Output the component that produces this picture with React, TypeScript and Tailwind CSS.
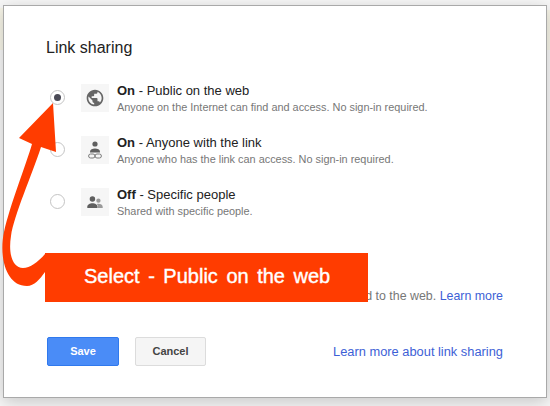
import { MdPublic } from "react-icons/md"

const LinkIcon = () => (
  <svg width="14" height="18" viewBox="0 0 14 18" fill="#5f5f5f">
    <circle cx="7" cy="3" r="2.6" />
    <path d="M2 10.500c0-1.800 2.500-3 5-3s5 1.200 5 3v1H2z" />
    <rect x="0.6" y="13" width="6.400" height="4" rx="2" fill="none" stroke="#7a7a7a" strokeWidth="1" />
    <rect x="7" y="13" width="6.400" height="4" rx="2" fill="none" stroke="#7a7a7a" strokeWidth="1" />
  </svg>
)

const PeopleIcon = () => (
  <svg width="16" height="12" viewBox="0 0 18 14">
    <circle cx="6" cy="3.500" r="3.200" fill="#5f5f5f" />
    <circle cx="13" cy="5.500" r="2.500" fill="#9a9a9a" />
    <path d="M0 14v-1.500C0 10 3 8.500 6 8.500s6 1.500 6 4V14z" fill="#5f5f5f" />
    <path d="M12.500 14v-1.500c0-1.200-.5-2.300-1.400-3.100.7-.3 1.300-.4 2-.4 2.500 0 4.900 1.300 4.900 3.500V14z" fill="#9a9a9a" />
  </svg>
)

const options = [
  { state: "On", title: "Public on the web", desc: "Anyone on the Internet can find and access. No sign-in required.", icon: <MdPublic size={20} color="#666" />, checked: true },
  { state: "On", title: "Anyone with the link", desc: "Anyone who has the link can access. No sign-in required.", icon: <LinkIcon />, checked: false },
  { state: "Off", title: "Specific people", desc: "Shared with specific people.", icon: <PeopleIcon />, checked: false },
]

function Option({ state, title, desc, icon, checked }: (typeof options)[number]) {
  return (
    <div className="flex h-7 items-center">
      <div className="mb-[1px] flex h-[15px] w-[15px] items-center justify-center rounded-full border border-[#c4c4c4] bg-white">
        {checked && <div className="h-[7px] w-[7px] rounded-full bg-[#4a4a55]" />}
      </div>
      <div className="ml-[16px] flex h-7 w-7 items-center justify-center bg-[#f6f6f6]">{icon}</div>
      <div className="ml-2 flex flex-col">
        <div className="text-[13px] leading-[16px] text-[#222]">
          <span className="font-bold">{state}</span> - {title}
        </div>
        <div className="mt-[1px] text-[10.9px] leading-[14px] text-[#777]">{desc}</div>
      </div>
    </div>
  )
}

function App() {
  return (
    <div className="relative h-[406px] w-[550px] overflow-hidden bg-[#f7f7f7] pl-[3px] pt-[5px] font-['Liberation_Sans',Arial,sans-serif]">
      {/* page peeking out behind the dialog */}
      <div className="absolute left-0 top-[8px] h-[42px] w-[3px] bg-[#f7f5e8]" />
      <div className="absolute right-0 top-[10px] h-[40px] w-[3px] bg-[#f7f5e8]" />

      <div className="relative h-[393px] w-[544px] border border-[#a9a9a9] bg-white pl-[42px] pr-[43px] pt-[33px] shadow-[0_4px_16px_rgba(0,0,0,0.2)]">
        <h1 className="text-[16px] leading-[18px] text-[#222]">Link sharing</h1>

        <div className="mt-[27px] flex flex-col gap-6 pl-[4px]">
          {options.map((o) => (
            <Option key={o.title} {...o} />
          ))}
        </div>

        <div className="mt-[73px] text-right text-[12.4px] leading-[14px] text-[#777]">
          Linked to the web. <a className="text-[#3d5fd6]">Learn more</a>
        </div>

        <div className="mt-[34px] flex items-center pl-px">
          <button className="h-[29px] w-[72px] rounded-[2px] border border-[#3079ed] bg-[#4a8cf7] text-[11px] font-bold text-white">
            Save
          </button>
          <button className="ml-4 h-[29px] w-[71px] rounded-[2px] border border-[#dcdcdc] bg-[#f5f5f5] text-[11px] font-bold text-[#444]">
            Cancel
          </button>
          <a className="ml-auto text-[12.85px] text-[#3d5fd6]">Learn more about link sharing</a>
        </div>
      </div>

      {/* annotation on top of the dialog */}
      <div className="absolute left-[45px] top-[253px] flex h-[49px] w-[323px] items-center bg-[#ff3c00] pb-[3px] pl-[39px] text-[20px] text-white [word-spacing:3px]">
        <span className="font-normal [-webkit-text-stroke:0.4px_white]">Select - Public on the web</span>
      </div>
      <svg className="absolute left-0 top-0" width="60" height="300" viewBox="0 0 60 300">
        <path
          d="M53 103 L19 138 L32 144 C26 165 10 205 4 232 C-1 255 5 286 27 286 C34 286 40 279 45 272 L45 254 C38 262 30 268 23 268 C13 268 8 255 11 236 C14 215 32 175 41 147 L56 152 Z"
          fill="#ff3c00"
        />
      </svg>
    </div>
  )
}

export default App
